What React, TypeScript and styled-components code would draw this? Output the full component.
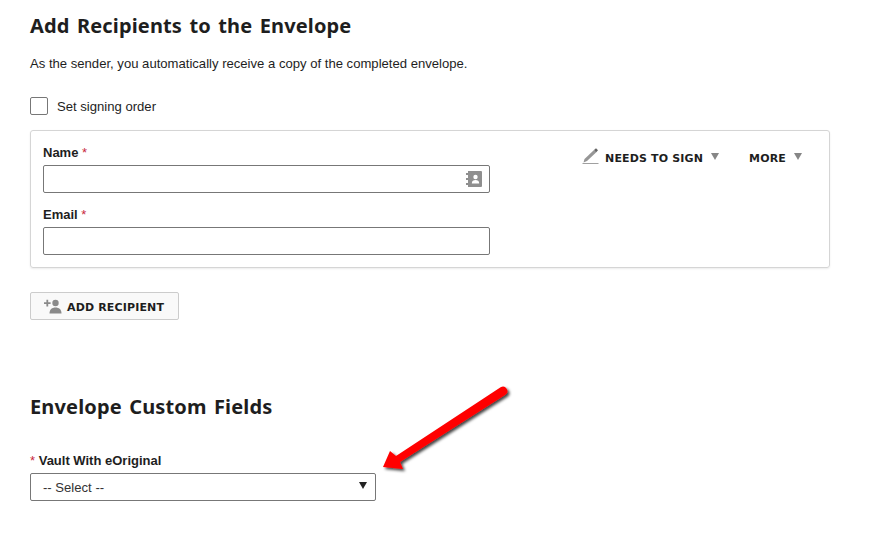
import styled, { createGlobalStyle } from 'styled-components'

const GlobalStyle = createGlobalStyle`
  html, body {
    margin: 0;
    padding: 0;
    background: #fff;
    color: #1e1e1e;
    font-family: "Liberation Sans", Arial, sans-serif;
    font-size: 13px;
  }
`

const Page = styled.div`
  position: relative;
  width: 887px;
  height: 538px;
  overflow: hidden;
  box-sizing: border-box;
  padding: 14px 57px 0 30px;
`

const Heading = styled.h2`
  margin: 0;
  font-family: "Noto Sans", Verdana, sans-serif;
  font-size: 20px;
  line-height: 24px;
  font-weight: 700;
  letter-spacing: 0.15px;
  word-spacing: 2px;
  color: #1e1e1e;
`

const Intro = styled.p`
  margin: 16px 0 0;
  font-size: 13.1px;
  line-height: 20px;
`

const OrderRow = styled.label`
  display: flex;
  align-items: center;
  gap: 9px;
  margin-top: 23px;
  font-size: 13.1px;
`

const Check = styled.span`
  width: 16px;
  height: 16px;
  border: 1px solid #777;
  border-radius: 2px;
  background: #fff;
`

const Card = styled.section`
  display: flex;
  justify-content: space-between;
  box-sizing: border-box;
  height: 138px;
  margin-top: 15px;
  padding: 14px 12px 0;
  border: 1px solid #d5d5d5;
  border-radius: 3px;
  box-shadow: 0 1px 2px rgba(0, 0, 0, 0.08);
`

const Fields = styled.div`
  display: flex;
  flex-direction: column;
  gap: 14px;
  width: 447px;
`

const Field = styled.div`
  display: flex;
  flex-direction: column;
`

const Label = styled.span`
  font-size: 13px;
  line-height: 16px;
  font-weight: 700;
  margin-bottom: 4px;
  color: #1e1e1e;
`

const Req = styled.span`
  color: #c8283c;
  font-weight: 400;
`

const InputBox = styled.div`
  display: flex;
  align-items: center;
  justify-content: flex-end;
  box-sizing: border-box;
  height: 28px;
  padding: 0 6px;
  border: 1px solid #777;
  border-radius: 2px;
  background: #fff;
`

const Actions = styled.div`
  display: flex;
  align-items: flex-start;
  gap: 30px;
  padding: 3px 15px 0 0;
`

const Action = styled.div`
  display: flex;
  align-items: center;
  height: 20px;
`

const CapsText = styled.span`
  font-family: "DejaVu Sans", Verdana, sans-serif;
  font-size: 11px;
  font-weight: 700;
  letter-spacing: 0.15px;
  color: #1e1e1e;
  white-space: nowrap;
`

const Caret = styled.span<{ $color?: string }>`
  width: 0;
  height: 0;
  margin-left: 8px;
  margin-top: -3px;
  border-left: 4.5px solid transparent;
  border-right: 4.5px solid transparent;
  border-top: 7px solid ${(p) => p.$color || '#868686'};
`

const PenIcon = styled.svg`
  margin: -4px 6px 0 0;
`

const AddButton = styled.button`
  display: flex;
  align-items: center;
  gap: 5px;
  box-sizing: border-box;
  width: 149px;
  height: 28px;
  margin-top: 24px;
  padding: 2px 0 0 13px;
  border: 1px solid #ccc;
  border-radius: 2px;
  background: #f9f9f9;
`

const SecondHeading = styled(Heading)`
  margin-top: 75px;
`

const VaultField = styled(Field)`
  width: 346px;
  margin-top: 34px;
`

const SelectBox = styled.div`
  display: flex;
  align-items: center;
  justify-content: space-between;
  box-sizing: border-box;
  height: 28px;
  padding: 0 8px 0 12px;
  border: 1px solid #777;
  border-radius: 2px;
  font-size: 13.1px;
  color: #333;
`

const Arrow = styled.svg`
  position: absolute;
  left: 370px;
  top: 375px;
`

const App = () => {
  return (
    <Page>
      <GlobalStyle />
      <Heading>Add Recipients to the Envelope</Heading>
      <Intro>As the sender, you automatically receive a copy of the completed envelope.</Intro>
      <OrderRow>
        <Check />
        Set signing order
      </OrderRow>
      <Card>
        <Fields>
          <Field>
            <Label>Name <Req>*</Req></Label>
            <InputBox>
              <svg width="18" height="18" viewBox="0 0 18 18">
                <path d="M3 1h13a1 1 0 0 1 1 1v14a1 1 0 0 1-1 1H3z" fill="#8f8f8f" />
                <path d="M1 3h3v2H1zM1 8h3v2H1zM1 13h3v2H1z" fill="#8f8f8f" />
                <circle cx="10.5" cy="7" r="2.2" fill="#fff" />
                <path d="M6.8 13.5c0-2.4 1.6-3.4 3.7-3.4s3.7 1 3.7 3.4z" fill="#fff" />
              </svg>
            </InputBox>
          </Field>
          <Field>
            <Label>Email <Req>*</Req></Label>
            <InputBox />
          </Field>
        </Fields>
        <Actions>
          <Action>
            <PenIcon width="17" height="18" viewBox="0 0 17 18">
              <path d="M1.5 15.5 L2.5 12 L12 3 L14 5.5 L5 14z" fill="#969696" />
              <path d="M12 3 L14 1.2 L16 3.2 L14 5.5z" fill="#666" />
              <path d="M0.5 16.5h16" stroke="#a0a0a0" strokeWidth="1" />
            </PenIcon>
            <CapsText>NEEDS TO SIGN</CapsText>
            <Caret />
          </Action>
          <Action>
            <CapsText>MORE</CapsText>
            <Caret />
          </Action>
        </Actions>
      </Card>
      <AddButton>
        <svg width="18" height="16" viewBox="0 0 18 16">
          <path d="M0 3.2h2.4V.8h1.8v2.4h2.4V5H4.2v2.4H2.4V5H0z" fill="#8a8a8a" />
          <circle cx="11.5" cy="4" r="3.2" fill="#8a8a8a" />
          <path d="M5.5 14.5c0-4 2.4-6 6-6s6 2 6 6z" fill="#8a8a8a" />
        </svg>
        <CapsText>ADD RECIPIENT</CapsText>
      </AddButton>
      <SecondHeading>Envelope Custom Fields</SecondHeading>
      <VaultField>
        <Label><Req>*</Req> Vault With eOriginal</Label>
        <SelectBox>
          -- Select --
          <Caret $color="#222" />
        </SelectBox>
      </VaultField>
      <Arrow width="150" height="110" viewBox="0 0 150 110">
        <defs>
          <filter id="arrowShadow" x="-20%" y="-20%" width="140%" height="140%">
            <feDropShadow dx="2" dy="2" stdDeviation="1.4" floodColor="#000" floodOpacity="0.75" />
          </filter>
        </defs>
        <g filter="url(#arrowShadow)">
          <path d="M135.4 19.8 A4.5 4.5 0 0 0 130.6 12.2 L26 81 L20 76 L13 92 L33 94 L30 87z" fill="#f00" />
        </g>
      </Arrow>
    </Page>
  )
}

export default App
